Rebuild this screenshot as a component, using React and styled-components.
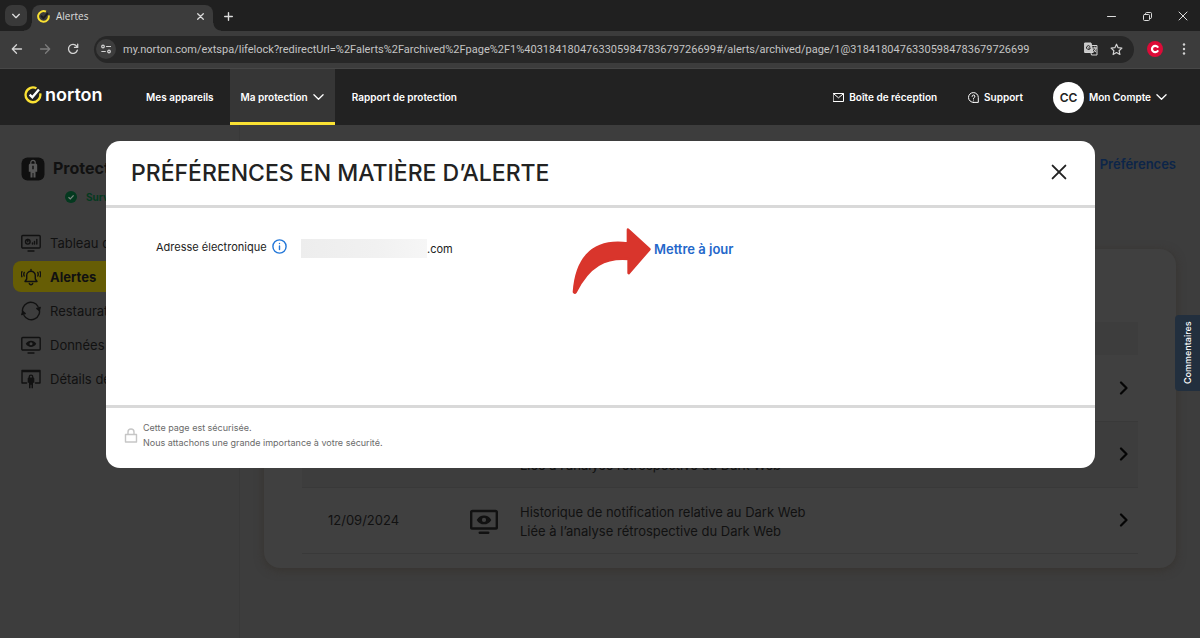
import React from 'react';
import styled, { createGlobalStyle } from 'styled-components';

const GlobalStyle = createGlobalStyle`
  * {
    box-sizing: border-box;
  }
  body {
    margin: 0;
    overflow: hidden;
    background: #3d3d3d;
    font-family: Inter, 'Liberation Sans', sans-serif;
  }
  button, input {
    margin: 0;
    padding: 0;
    border: none;
    background: none;
    color: inherit;
    font: inherit;
  }
  svg {
    display: block;
    flex: none;
  }
`;

const Screen = styled.div`
  display: flex;
  flex-direction: column;
  min-height: 100vh;
`;

/* ---------- browser ---------- */

const TabStrip = styled.div`
  display: flex;
  align-items: flex-start;
  height: 31px;
  padding: 5px 10px 0 5px;
  background: #202020;
  color: #dcdcdc;
`;

const TabSearch = styled.button`
  display: grid;
  place-items: center;
  width: 22px;
  height: 21px;
  border-radius: 7px;
  background: #393939;
`;

const Tab = styled.div`
  position: relative;
  display: flex;
  align-items: center;
  gap: 6px;
  width: 181px;
  height: 26px;
  margin-left: 5px;
  padding: 0 7px 4px 5px;
  border-radius: 8px 8px 0 0;
  background: #3c3c3c;
  font-family: 'Open Sans', 'Noto Sans', sans-serif;
  font-size: 10px;

  &::before,
  &::after {
    content: '';
    position: absolute;
    bottom: 0;
    width: 8px;
    height: 8px;
  }
  &::before {
    left: -8px;
    background: radial-gradient(circle at 0 0, transparent 7px, #3c3c3c 8px);
  }
  &::after {
    right: -8px;
    background: radial-gradient(circle at 100% 0, transparent 7px, #3c3c3c 8px);
  }
`;

const TabTitle = styled.span`
  flex: 1;
`;

const PlainButton = styled.button`
  display: grid;
  place-items: center;
  width: ${(p) => p.$size || 14}px;
  height: ${(p) => p.$size || 14}px;
`;

const NewTab = styled(PlainButton)`
  margin: 4px 0 0 8px;
`;

const WindowButtons = styled.div`
  display: flex;
  gap: 22px;
  margin: 4px 0 0 auto;
`;

const Toolbar = styled.div`
  display: flex;
  align-items: center;
  height: 38px;
  padding: 0 9px 1px 10px;
  border-bottom: 1px solid #474747;
  background: #3c3c3c;
  color: #d4d4d4;
`;

const NavButtons = styled.div`
  display: flex;
  gap: 14px;
  margin-right: 14px;
`;

const AddressBar = styled.div`
  display: flex;
  flex: 1;
  align-items: center;
  gap: 7px;
  height: 27px;
  padding: 0 11px 0 2px;
  border-radius: 14px;
  background: #272727;
`;

const SiteInfo = styled.button`
  display: grid;
  place-items: center;
  width: 20px;
  height: 20px;
  border-radius: 50%;
  background: #3d3d3d;
`;

const UrlInput = styled.input`
  flex: 1;
  min-width: 0;
  color: #c4c4c4;
  outline: none;
  font-family: Roboto, 'Noto Sans', sans-serif;
  font-size: 11px;
`;

const BarIcons = styled.div`
  display: flex;
  gap: 11px;
`;

const Extension = styled.button`
  display: grid;
  place-items: center;
  width: 16px;
  height: 16px;
  margin: 0 14px 0 13px;
  border-radius: 50%;
  background: #dd0b38;
`;

/* ---------- site header ---------- */

const SiteHeader = styled.header`
  display: flex;
  align-items: stretch;
  justify-content: space-between;
  height: 56px;
  padding: 0 33px 0 24px;
  background: #222222;
  color: #ffffff;
  font-size: 10px;
  font-weight: 600;
`;

const HeaderGroup = styled.nav`
  display: flex;
  align-items: stretch;
`;

const Logo = styled.a`
  display: flex;
  align-items: center;
  gap: 3px;
  width: 106px;
  padding-bottom: 4px;
  color: #ffffff;
  font-size: 18px;
  font-weight: 600;
  line-height: 20px;
  text-decoration: none;
`;

const HeaderLink = styled.a`
  display: flex;
  align-items: center;
  gap: 5px;
  padding: ${(p) => (p.$active ? '3px' : '0')} ${(p) => p.$pad || 16}px 0;
  border-bottom: ${(p) => (p.$active ? '3px solid #fbe233' : 'none')};
  background: ${(p) => (p.$active ? '#363636' : 'none')};
  color: #ffffff;
  text-decoration: none;
  white-space: nowrap;
`;

const AccountButton = styled.button`
  display: flex;
  align-items: center;
  gap: 5px;
  margin-left: 15px;
`;

const Avatar = styled.span`
  display: grid;
  place-items: center;
  width: 31px;
  height: 31px;
  border-radius: 50%;
  background: #ffffff;
  color: #222222;
  font-size: 12px;
`;

/* ---------- dimmed page ---------- */

const Page = styled.div`
  position: relative;
  display: flex;
  flex: 1;
  background: #3d3d3d;
  color: #111111;
  font-size: 13px;
`;

const Sidebar = styled.aside`
  width: 240px;
  padding: 30px 13px 0;
  border-right: 1px solid #393939;
  white-space: nowrap;
`;

const Product = styled.div`
  display: flex;
  align-items: center;
  gap: 8px;
  padding: 0 8px;
  font-size: 16px;
  font-weight: 700;
  line-height: 27px;
`;

const Monitoring = styled.div`
  display: flex;
  align-items: center;
  gap: 9px;
  padding: 7px 0 0 52px;
  color: #04391f;
  font-size: 10px;
  font-weight: 700;
  line-height: 16px;
`;

const Menu = styled.nav`
  display: flex;
  flex-direction: column;
  gap: 3px;
  margin-top: 22px;
`;

const MenuLink = styled.a`
  display: flex;
  align-items: center;
  gap: 9px;
  height: 31px;
  padding: 0 8px;
  border-radius: 8px;
  background: ${(p) => (p.$active ? '#665d05' : 'none')};
  color: #111111;
  font-weight: ${(p) => (p.$active ? 700 : 400)};
  text-decoration: none;
`;

const Main = styled.main`
  flex: 1;
  padding: 29px 24px 0;
`;

const TopLinks = styled.div`
  display: flex;
  justify-content: flex-end;
  line-height: 20px;

  a {
    color: #0c2549;
    font-weight: 600;
    text-decoration: none;
  }
`;

const Card = styled.section`
  margin-top: 75px;
  padding: 73px 38px 14px;
  border-radius: 16px;
  background: #404040;
  box-shadow: 0 2px 10px #37332f;
`;

const AlertTable = styled.table`
  width: 100%;
  border-collapse: collapse;

  th {
    height: 33px;
    background: #3d3d3d;
  }
  td {
    height: 66px;
    padding: 0;
    border-bottom: 1px solid #393939;
    line-height: 19px;
  }
  tr:nth-child(even) td {
    background: #3d3d3d;
  }
  td:nth-child(1) {
    width: 168px;
    padding-left: 26px;
  }
  td:nth-child(2) {
    width: 50px;
    padding-top: 4px;
  }
  td:nth-child(3) {
    padding-top: 3px;
  }
  td:nth-child(4) {
    width: 19px;
  }
`;

const Feedback = styled.button`
  position: absolute;
  top: 190px;
  right: 0;
  width: 25px;
  height: 76px;
  border-radius: 0 4px 4px 0;
  background: #222f3e;
  color: #ffffff;
  font-size: 9px;
  font-weight: 500;
  line-height: 25px;
  writing-mode: vertical-rl;
  transform: rotate(180deg);
`;

/* ---------- dialog ---------- */

const Overlay = styled.div`
  position: absolute;
  inset: 0;
  display: flex;
  align-items: flex-start;
  padding: 16px 105px 0 106px;
`;

const Dialog = styled.div`
  flex: 1;
  border-radius: 14px;
  background: #ffffff;
  color: #222222;
`;

const DialogHeader = styled.div`
  display: flex;
  align-items: flex-start;
  justify-content: space-between;
  height: 67px;
  padding: 17px 22px 0 25px;
  border-bottom: 3px solid #d9d9d9;
`;

const DialogTitle = styled.h1`
  margin: 0;
  font-size: 23px;
  font-weight: 500;
  line-height: 30px;
`;

const DialogBody = styled.div`
  position: relative;
  display: flex;
  align-items: flex-start;
  padding: 31px 50px 146px;
  font-size: 11px;
  line-height: 20px;
`;

const FieldLabel = styled.div`
  display: flex;
  align-items: center;
  gap: 5px;
  width: 145px;
  line-height: 14px;
`;

const FieldValue = styled.div`
  display: flex;
  width: 353px;
`;

const Redacted = styled.span`
  width: 126px;
  height: 19px;
  background: linear-gradient(90deg, #ededed, #f1f1f1 60%, #f6f6f6);
`;

const UpdateLink = styled.a`
  color: #2367ca;
  font-size: 13px;
  font-weight: 600;
  text-decoration: none;
`;

const Pointer = styled.svg`
  position: absolute;
  top: 19px;
  left: 466px;
`;

const DialogFooter = styled.div`
  display: flex;
  align-items: center;
  gap: 5px;
  padding: 12px 18px 18px;
  border-top: 3px solid #d9d9d9;
  color: #6a6a6a;
  font-size: 9px;
  line-height: 15px;

  p {
    margin: 0;
  }
`;

/* ---------- icons ---------- */

const Icon = ({ w = 14, h = w, box = `0 0 ${w} ${h}`, sw = 1.4, children }) => (
  <svg
    width={w}
    height={h}
    viewBox={box}
    fill="none"
    stroke="currentColor"
    strokeWidth={sw}
    strokeLinecap="round"
    strokeLinejoin="round"
    aria-hidden="true"
  >
    {children}
  </svg>
);

const ChevronDown = ({ w = 11, sw = 1.4 }) => (
  <Icon w={w} h={8} box="0 0 12 8" sw={sw}>
    <path d="M1 1.5l5 5 5-5" />
  </Icon>
);

const NortonRing = () => (
  <Icon w={18} box="0 0 20 20" sw={2.6}>
    <path d="M13.8 2.6A8.2 8.2 0 1 0 18 8.2" stroke="#fbe233" strokeLinecap="butt" />
    <path d="M6.3 9.6l3 3L16.6 4" stroke="#ffffff" strokeLinecap="butt" strokeLinejoin="miter" />
  </Icon>
);

const TabRing = () => (
  <Icon w={13} box="0 0 20 20" sw={3}>
    <path d="M13.8 2.6A8.2 8.2 0 1 0 18 8.2" stroke="#fbe233" strokeLinecap="butt" />
    <path d="M7 9.6l3 3 6-7" stroke="#1c1c1c" />
  </Icon>
);

const Close = ({ w = 10, sw = 1.2 }) => (
  <Icon w={w} box="0 0 10 10" sw={sw}>
    <path d="M1 1l8 8M9 1l-8 8" />
  </Icon>
);

const ProductIcon = () => (
  <svg width="24" height="24" viewBox="0 0 24 24" aria-hidden="true">
    <rect x="0.5" y="0.5" width="23" height="23" rx="6" fill="#101010" />
    <path d="M9.8 7V5.600a2.2 2.2 0 0 1 4.400 0V7" fill="none" stroke="#585858" strokeWidth="1.2" />
    <path d="M8.600 6.800h6.800l.8 1v7h-1.700v5.700h-2v-4.500h-1v4.500h-2v-5.700H7.800V7.800z" fill="#585858" />
    <path d="M12 8.800v3.500" stroke="#101010" strokeWidth="1.4" />
  </svg>
);

const Monitor = ({ w = 20, sw = 1.4, children }) => (
  <Icon w={w} h={(w * 18) / 20} box="0 0 20 18" sw={sw}>
    <rect x="0.8" y="1.5" width="18.4" height="12.5" rx="1" />
    <path d="M7 17h6" />
    {children}
  </Icon>
);

const MonitorEye = ({ w, sw }) => (
  <Monitor w={w} sw={sw}>
    <path
      d="M4.800 7.800C7 3.600 13 3.600 15.200 7.800 13 12 7 12 4.800 7.800z"
      fill="currentColor"
      stroke="none"
    />
    <circle cx="10" cy="7.8" r="1.5" fill="#404040" stroke="none" />
  </Monitor>
);

const DashboardIcon = () => (
  <Monitor>
    <circle cx="6.8" cy="7.8" r="2.3" />
    <path d="M6.8 7.8V5.5M11.5 10V9M13.5 10V7.5M15.8 10V5.5" />
  </Monitor>
);

const BellIcon = () => (
  <Icon w={20} h={18} sw={1.4}>
    <path d="M10 1.5v1M4 13.5h12l-1.7-2.500V7.500a4.300 4.300 0 0 0-8.600 0V11zM8.300 15.500a1.800 1.800 0 0 0 3.400 0" />
    <path d="M3.200 4.500a4 4 0 0 0 0 3.500M16.800 4.500a4 4 0 0 1 0 3.500M.9 3.700a6 6 0 0 0 0 5M19.100 3.700a6 6 0 0 1 0 5" />
  </Icon>
);

const RestoreIcon = () => (
  <Icon w={20} sw={1.4}>
    <path d="M2 12.500A8.300 8.300 0 0 1 17 5.500M18 7.500A8.300 8.300 0 0 1 3 14.500" />
    <path d="M.8 13.500l1-3 2.400 2zM19.200 6.500l-1 3-2.400-2z" fill="currentColor" />
  </Icon>
);

const DetailsIcon = () => (
  <Icon w={20} sw={1.4}>
    <path d="M5.5 14H1V1.5h18V14h-4.5M1 2.5h18" />
    <path d="M8.300 8.500V7.800a1.700 1.700 0 0 1 3.400 0v.7" />
    <path
      d="M7.500 8.500h5l.8.8v4.500h-1.300v5.500h-1.500v-3.500h-1v3.500H8v-5.500H6.700V9.300z"
      fill="currentColor"
      stroke="none"
    />
  </Icon>
);

const ChevronRight = () => (
  <Icon w={10} h={14} sw={2.2}>
    <path d="M2 1.5L7.5 7 2 12.5" stroke="#050505" />
  </Icon>
);

const menu = [
  { label: 'Tableau de', icon: <DashboardIcon /> },
  { label: 'Alertes', icon: <BellIcon />, active: true },
  { label: 'Restaurat', icon: <RestoreIcon /> },
  { label: 'Données', icon: <MonitorEye /> },
  { label: 'Détails de', icon: <DetailsIcon /> },
];

const alerts = [
  { id: 1 },
  { id: 2, detail: 'Liée à l’analyse rétrospective du Dark Web' },
  {
    id: 3,
    date: '12/09/2024',
    title: 'Historique de notification relative au Dark Web',
    detail: 'Liée à l’analyse rétrospective du Dark Web',
  },
];

const url =
  'my.norton.com/extspa/lifelock?redirectUrl=%2Falerts%2Farchived%2Fpage%2F1%4031841804763305984783679726699' +
  '#/alerts/archived/page/1@31841804763305984783679726699';

function BrowserBar() {
  return (
    <>
      <TabStrip>
        <TabSearch aria-label="Rechercher dans les onglets">
          <ChevronDown w={8} sw={2} />
        </TabSearch>
        <Tab>
          <TabRing />
          <TabTitle>Alertes</TabTitle>
          <PlainButton $size={12} aria-label="Fermer l’onglet">
            <Close w={7} sw={1.8} />
          </PlainButton>
        </Tab>
        <NewTab aria-label="Nouvel onglet">
          <Icon w={9} sw={1.4}>
            <path d="M4.5.7v7.6M.7 4.5h7.6" />
          </Icon>
        </NewTab>
        <WindowButtons>
          <PlainButton aria-label="Réduire">
            <Icon w={9} sw={1}>
              <path d="M.5 4.5h8" />
            </Icon>
          </PlainButton>
          <PlainButton aria-label="Restaurer">
            <Icon w={9} sw={1}>
              <rect x=".5" y="2.5" width="6" height="6" rx="1" />
              <path d="M2.5 1.5a1 1 0 0 1 1-1h4a1 1 0 0 1 1 1v4a1 1 0 0 1-1 1" />
            </Icon>
          </PlainButton>
          <PlainButton aria-label="Fermer">
            <Close w={10} sw={1} />
          </PlainButton>
        </WindowButtons>
      </TabStrip>
      <Toolbar>
        <NavButtons>
          <PlainButton aria-label="Précédent">
            <Icon w={12} sw={1.3}>
              <path d="M10.5 6h-9M5.5 1.8L1.3 6l4.2 4.2" />
            </Icon>
          </PlainButton>
          <PlainButton aria-label="Suivant" disabled>
            <Icon w={12} sw={1.3}>
              <path d="M1.5 6h9M6.5 1.8L10.7 6l-4.2 4.2" stroke="#7c7c7c" />
            </Icon>
          </PlainButton>
          <PlainButton aria-label="Actualiser">
            <Icon w={12} sw={1.3}>
              <path d="M10.3 7.2A4.5 4.5 0 1 1 9.6 3.2L10.6 4.3M10.7 1.2v3.2H7.5" />
            </Icon>
          </PlainButton>
        </NavButtons>
        <AddressBar>
          <SiteInfo aria-label="Informations sur le site">
            <Icon w={10} sw={1.2}>
              <circle cx="2" cy="2.5" r="1.3" />
              <path d="M5.5 2.5h4M.8 7.5h3.5" />
              <circle cx="8" cy="7.5" r="1.3" />
            </Icon>
          </SiteInfo>
          <UrlInput aria-label="Adresse" defaultValue={url} />
          <BarIcons>
            <PlainButton aria-label="Traduire cette page">
              <Icon w={14} sw={1}>
                <path d="M1 1h6l2 9.5H1z" fill="#c8c8c8" />
                <path d="M8.5 3.5h4.5v9.5H7.5l-.5-2M9 6h3.5M10.8 5v1M12 6c-.3 2-1.5 3.5-2.5 4M9.8 7.5l2 2.5" />
                <path d="M6 4.5a1.900 1.900 0 1 0 .3 1.500H4.700" stroke="#272727" />
              </Icon>
            </PlainButton>
            <PlainButton aria-label="Ajouter aux favoris">
              <Icon w={13} sw={1.2}>
                <path d="M6.5 1.2l1.6 3.5 3.8.4-2.8 2.6.8 3.8-3.4-1.9-3.4 1.9.8-3.8L1.1 5.1l3.8-.4z" />
              </Icon>
            </PlainButton>
          </BarIcons>
        </AddressBar>
        <Extension aria-label="Extension">
          <Icon w={10} sw={2.2}>
            <path d="M7.6 2.9a3.2 3.2 0 1 0 0 4.2" stroke="#ffffff" />
          </Icon>
        </Extension>
        <PlainButton aria-label="Menu">
          <Icon w={4} h={14}>
            <g fill="currentColor" stroke="none">
              <circle cx="2" cy="2.5" r="1.2" />
              <circle cx="2" cy="7" r="1.2" />
              <circle cx="2" cy="11.5" r="1.2" />
            </g>
          </Icon>
        </PlainButton>
      </Toolbar>
    </>
  );
}

function Header() {
  return (
    <SiteHeader>
      <HeaderGroup>
        <Logo href="#">
          <NortonRing />
          norton
        </Logo>
        <HeaderLink href="#">Mes appareils</HeaderLink>
        <HeaderLink href="#" $pad={11} $active>
          Ma protection
          <ChevronDown />
        </HeaderLink>
        <HeaderLink href="#" $pad={17}>
          Rapport de protection
        </HeaderLink>
      </HeaderGroup>
      <HeaderGroup>
        <HeaderLink href="#">
          <Icon w={11} h={9} sw={1}>
            <path d="M.5.5h10v8H.5zM.7.8l4.8 4 4.8-4" />
          </Icon>
          Boîte de réception
        </HeaderLink>
        <HeaderLink href="#" $pad={15}>
          <Icon w={11} sw={1}>
            <path d="M5.500 10.400H10.300V5.500a4.900 4.900 0 1 0-4.800 4.900z" />
            <path d="M4.100 4.400a1.400 1.400 0 1 1 1.900 1.300c-.4.200-.5.400-.5.800M5.500 8v.1" />
          </Icon>
          Support
        </HeaderLink>
        <AccountButton>
          <Avatar>CC</Avatar>
          Mon Compte
          <ChevronDown />
        </AccountButton>
      </HeaderGroup>
    </SiteHeader>
  );
}

function AlertPreferences() {
  return (
    <Overlay>
      <Dialog role="dialog" aria-labelledby="dialog-title">
        <DialogHeader>
          <DialogTitle id="dialog-title">PRÉFÉRENCES EN MATIÈRE D’ALERTE</DialogTitle>
          <PlainButton $size={28} aria-label="Fermer">
            <Close w={16} sw={1.2} />
          </PlainButton>
        </DialogHeader>
        <DialogBody>
          <FieldLabel>
            Adresse électronique
            <PlainButton $size={15} aria-label="Informations">
              <Icon w={15} sw={1.4}>
                <g stroke="#2377d8">
                  <circle cx="7.5" cy="7.5" r="6.6" />
                  <path d="M7.5 7v3.5M7.5 4.5v.1" />
                </g>
              </Icon>
            </PlainButton>
          </FieldLabel>
          <FieldValue>
            <Redacted />
            .com
          </FieldValue>
          <UpdateLink href="#">Mettre à jour</UpdateLink>
          <Pointer width="80" height="68" viewBox="0 0 240 204" aria-hidden="true">
            <path
              d="M6 195C12 110 50 34 168 50V8L232 67 170 138V96C100 90 50 116 11 195Q8 199 6 195z"
              fill="#d9352c"
              stroke="#d9352c"
              strokeWidth="8"
              strokeLinejoin="round"
            />
          </Pointer>
        </DialogBody>
        <DialogFooter>
          <Icon w={14} h={15} sw={1.4}>
            <path d="M1.5 6.5h11v7.5h-11zM4 6.5V4a3 3 0 0 1 6 0v2.5" stroke="#c6c6c6" />
          </Icon>
          <div>
            <p>Cette page est sécurisée.</p>
            <p>Nous attachons une grande importance à votre sécurité.</p>
          </div>
        </DialogFooter>
      </Dialog>
    </Overlay>
  );
}

export default function App() {
  return (
    <Screen>
      <GlobalStyle />
      <BrowserBar />
      <Header />
      <Page>
        <Sidebar>
          <Product>
            <ProductIcon />
            Protect
          </Product>
          <Monitoring>
            <svg width="12" height="12" viewBox="0 0 12 12" aria-hidden="true">
              <circle cx="6" cy="6" r="6" fill="#04391f" />
              <path d="M3.5 6.2l1.8 1.7 3.3-3.5" fill="none" stroke="#7a857f" strokeWidth="1.3" />
            </svg>
            Surv
          </Monitoring>
          <Menu>
            {menu.map((item) => (
              <MenuLink key={item.label} href="#" $active={item.active}>
                {item.icon}
                {item.label}
              </MenuLink>
            ))}
          </Menu>
        </Sidebar>
        <Main>
          <TopLinks>
            <a href="#">Préférences</a>
          </TopLinks>
          <Card>
            <AlertTable>
              <thead>
                <tr>
                  <th colSpan={4} aria-label="Alertes" />
                </tr>
              </thead>
              <tbody>
                {alerts.map((alert) => (
                  <tr key={alert.id}>
                    <td>{alert.date}</td>
                    <td>
                      <MonitorEye w={28} sw={1.8} />
                    </td>
                    <td>
                      {alert.title}
                      <br />
                      {alert.detail}
                    </td>
                    <td>
                      <ChevronRight />
                    </td>
                  </tr>
                ))}
              </tbody>
            </AlertTable>
          </Card>
        </Main>
        <AlertPreferences />
        <Feedback>Commentaires</Feedback>
      </Page>
    </Screen>
  );
}
